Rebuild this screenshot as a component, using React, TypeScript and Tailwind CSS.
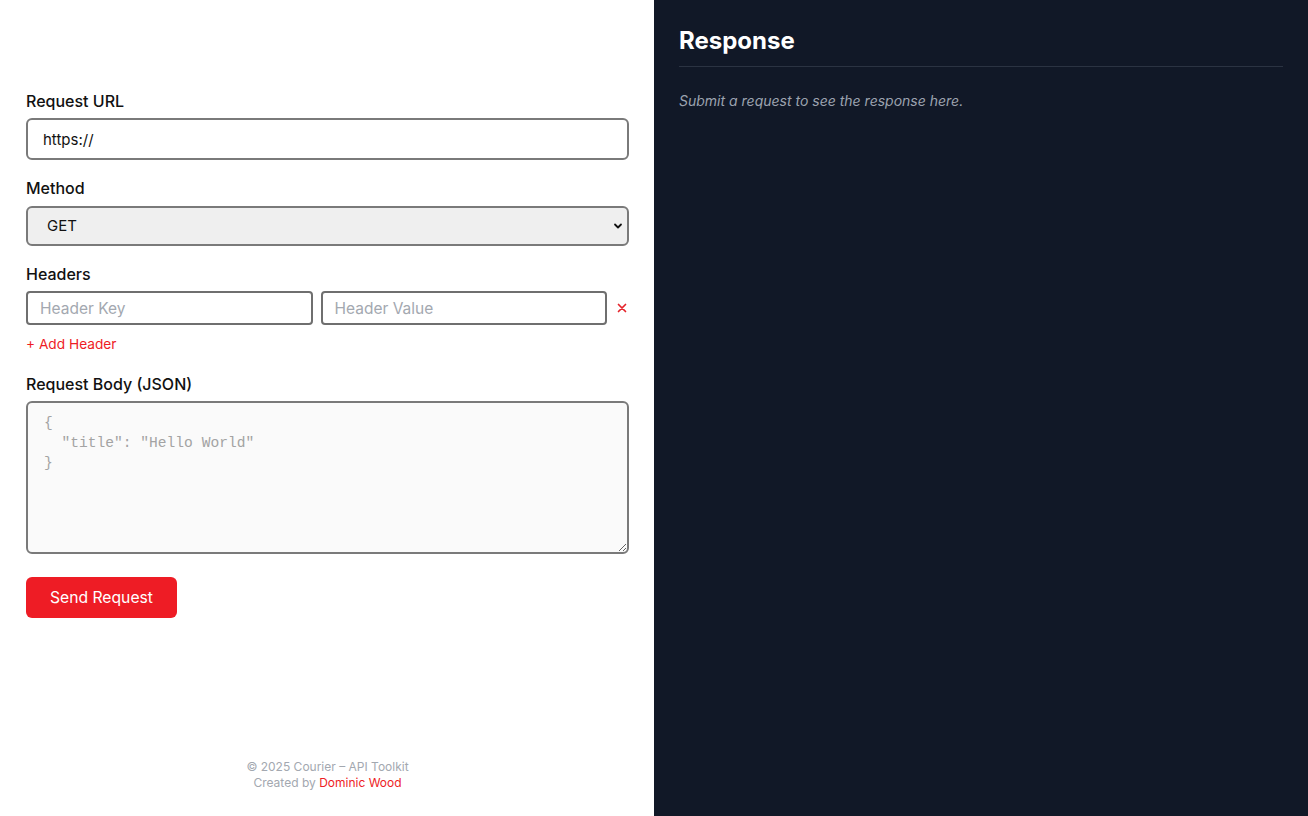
import { useState } from 'react';

export default function App() {
  const [url, setUrl] = useState('https://');
  const [method, setMethod] = useState('GET');
  const [headers, setHeaders] = useState([{ key: '', value: '' }]);
  const [body, setBody] = useState('');

  const updateHeader = (i: number, field: 'key' | 'value', val: string) => {
    setHeaders(prev => prev.map((h, idx) => (idx === i ? { ...h, [field]: val } : h)));
  };

  return (
    <div className="flex h-[816px] w-full font-['Inter',sans-serif]">
      {/* Request panel */}
      <div className="flex w-1/2 flex-col bg-white pl-[26px] pr-[25px] pt-[92px] pb-[25px]">
        <div className="flex flex-col">
          <label className="mb-[8px] text-[16px] font-medium leading-[18px] text-[#111]">Request URL</label>
          <input
            value={url}
            onChange={e => setUrl(e.target.value)}
            className="h-[42px] rounded-[6px] border-2 border-[#7a7a7a] bg-white px-[15px] text-[15px] text-[#111] outline-none"
          />

          <label className="mt-[19px] mb-[9px] text-[16px] font-medium leading-[18px] text-[#111]">Method</label>
          <div className="relative">
            <select
              value={method}
              onChange={e => setMethod(e.target.value)}
              className="h-[40px] w-full appearance-none rounded-[6px] border-2 border-[#7a7a7a] bg-[#efefef] px-[19px] text-[15px] text-[#111] outline-none"
            >
              <option>GET</option>
              <option>POST</option>
              <option>PUT</option>
              <option>PATCH</option>
              <option>DELETE</option>
            </select>
            <svg className="pointer-events-none absolute right-[6px] top-1/2 h-[10px] w-[10px] -translate-y-1/2" viewBox="0 0 10 10">
              <path d="M2 3.5 L5 6.5 L8 3.5" fill="none" stroke="#111" strokeWidth="1.8" strokeLinecap="round" strokeLinejoin="round" />
            </svg>
          </div>

          <label className="mt-[19px] mb-[8px] text-[16px] font-medium leading-[18px] text-[#111]">Headers</label>
          <div className="flex flex-col gap-2">
            {headers.map((h, i) => (
              <div key={i} className="flex items-center gap-[8px]">
                <input
                  value={h.key}
                  onChange={e => updateHeader(i, 'key', e.target.value)}
                  placeholder="Header Key"
                  className="h-[34px] min-w-0 flex-1 rounded-[4px] border-2 border-[#6f6f6f] px-[12px] text-[15.5px] text-[#111] outline-none placeholder:text-[#a3a8b0]"
                />
                <input
                  value={h.value}
                  onChange={e => updateHeader(i, 'value', e.target.value)}
                  placeholder="Header Value"
                  className="h-[34px] min-w-0 flex-1 rounded-[4px] border-2 border-[#6f6f6f] px-[12px] text-[15.5px] text-[#111] outline-none placeholder:text-[#a3a8b0]"
                />
                <button
                  onClick={() => setHeaders(prev => prev.filter((_, idx) => idx !== i))}
                  className="flex w-[14px] justify-center text-[#e5242b]"
                >
                  <svg viewBox="0 0 10 10" className="h-[10px] w-[10px]">
                    <path d="M1.5 1.5 L8.5 8.5 M8.5 1.5 L1.5 8.5" stroke="currentColor" strokeWidth="1.7" strokeLinecap="round" />
                  </svg>
                </button>
              </div>
            ))}
          </div>
          <button
            onClick={() => setHeaders(prev => [...prev, { key: '', value: '' }])}
            className="mt-[11px] self-start text-[13.7px] leading-[16px] text-[#ee1c25]"
          >
            + Add Header
          </button>

          <label className="mt-[23px] mb-[8px] text-[16px] font-medium leading-[18px] text-[#111]">Request Body (JSON)</label>
          <textarea
            value={body}
            onChange={e => setBody(e.target.value)}
            placeholder={'{\n  "title": "Hello World"\n}'}
            className="h-[153px] resize-y rounded-[6px] border-2 border-[#7a7a7a] bg-[#fafafa] px-[16px] pt-[10px] pb-[8px] font-['Liberation_Mono',monospace] text-[14.6px] leading-[20px] text-[#111] outline-none placeholder:text-[#a3a3a3]"
          />

          <button className="mt-[23px] h-[41px] self-start rounded-[6px] bg-[#ee1c25] px-[24px] text-[15.7px] text-white">
            Send Request
          </button>
        </div>

        <footer className="mt-auto text-center text-[12px] leading-[16px] text-[#a3a8b0]">
          <p>© 2025 Courier – API Toolkit</p>
          <p>
            Created by <a className="text-[#ee1c25]">Dominic Wood</a>
          </p>
        </footer>
      </div>

      {/* Response panel */}
      <div className="w-1/2 bg-[#111827] px-[25px] pt-[26px]">
        <h2 className="border-b border-[#2b3342] pb-[10px] text-[24px] font-bold leading-[30px] text-white">Response</h2>
        <p className="mt-[26px] text-[14px] italic leading-[16px] text-[#9ca3af]">Submit a request to see the response here.</p>
      </div>
    </div>
  );
}
